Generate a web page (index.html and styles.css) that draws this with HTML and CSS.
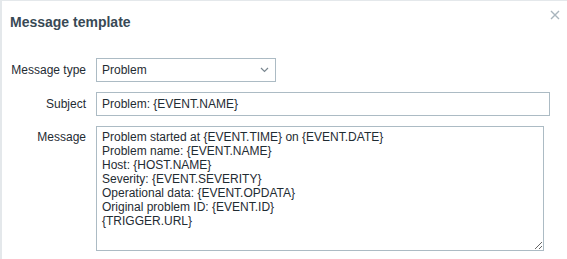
FILE: index.html
```html
<!DOCTYPE html>
<html lang="en">
  <head>
    <meta charset="UTF-8" />
    <meta name="viewport" content="width=device-width, initial-scale=1.0" />
    <title>Message template</title>
    <link rel="stylesheet" href="styles.css">
  </head>
  <body>
    <div class="dialog">
      <div class="dialog-header">
        <h4>Message template</h4>
        <button class="btn-close" title="Close">
          <svg width="10" height="10" viewBox="0 0 10 10">
            <path d="M1 1L9 9M9 1L1 9" stroke="currentColor" stroke-width="1.4" fill="none" />
          </svg>
        </button>
      </div>

      <form class="form-grid">
        <label class="form-label" for="message-type">Message type</label>
        <div class="form-field">
          <button type="button" class="select" id="message-type">
            <span>Problem</span>
            <svg width="9" height="6" viewBox="0 0 9 6">
              <path d="M1 1L4.5 4.5L8 1" stroke="currentColor" stroke-width="1.2" fill="none" />
            </svg>
          </button>
        </div>

        <label class="form-label" for="subject">Subject</label>
        <div class="form-field">
          <input type="text" id="subject" class="input-subject" value="Problem: {EVENT.NAME}" />
        </div>

        <label class="form-label label-top" for="message">Message</label>
        <div class="form-field">
          <textarea id="message" class="input-message">Problem started at {EVENT.TIME} on {EVENT.DATE}
Problem name: {EVENT.NAME}
Host: {HOST.NAME}
Severity: {EVENT.SEVERITY}
Operational data: {EVENT.OPDATA}
Original problem ID: {EVENT.ID}
{TRIGGER.URL}</textarea>
        </div>
      </form>
    </div>
  </body>
</html>
```

FILE: styles.css
```css
body {
  margin: 0;
  background-color: #e4e8eb;
  font-family: "Liberation Sans", Arial, sans-serif;
  font-size: 12px;
  color: #1f2c33;
}
.dialog {
  margin: 1px 0 0 2px;
  min-height: calc(100vh - 1px);
  background-color: #ffffff;
}
.dialog-header {
  position: relative;
  padding: 13px 8px 0 8px;
  height: 44px;
}
.dialog-header h4 {
  margin: 0;
  font-size: 14px;
  line-height: 16px;
  font-weight: bold;
  color: #384955;
}
.btn-close {
  position: absolute;
  top: 8px;
  right: 6px;
  width: 12px;
  height: 12px;
  padding: 1px;
  border: none;
  background: none;
  color: #a9b5bd;
  cursor: pointer;
}
.btn-close svg {
  display: block;
}
.form-grid {
  display: grid;
  grid-template-columns: 76px auto;
  column-gap: 10px;
  row-gap: 10px;
  padding-left: 8px;
  align-items: start;
}
.form-label {
  text-align: right;
  line-height: 24px;
  white-space: nowrap;
}
.label-top {
  line-height: 14px;
  padding-top: 4px;
}
.form-field {
  display: flex;
}
.select,
.input-subject,
.input-message {
  box-sizing: border-box;
  border: 1px solid #acbbc4;
  background-color: #ffffff;
  font-family: inherit;
  font-size: 12px;
  color: #1f2c33;
  margin: 0;
  border-radius: 0;
}
.select {
  display: flex;
  align-items: center;
  justify-content: space-between;
  width: 180px;
  height: 24px;
  padding: 0 6px 0 5px;
  text-align: left;
  cursor: pointer;
}
.select svg {
  color: #7a8790;
}
.input-subject {
  width: 454px;
  height: 24px;
  padding: 0 5px;
}
.input-message {
  width: 448px;
  height: 125px;
  padding: 3px 5px;
  line-height: 14px;
  resize: vertical;
}
```
